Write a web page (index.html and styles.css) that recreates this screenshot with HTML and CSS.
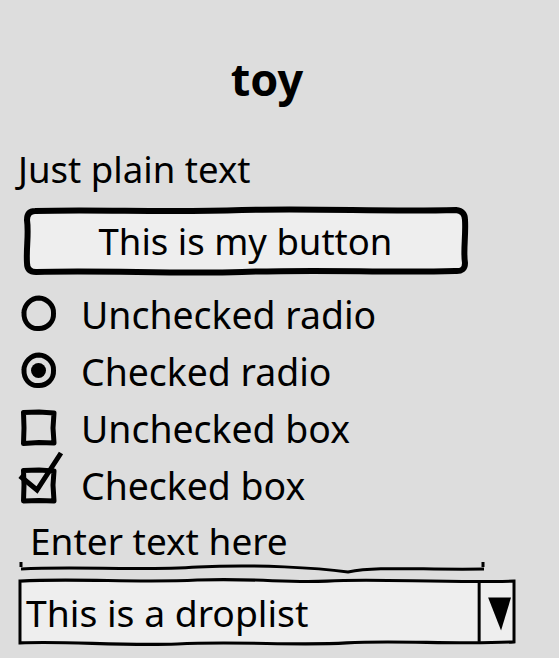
FILE: index.html
```html
<!DOCTYPE html>
<html lang="en">
<head>
    <meta charset="UTF-8">
    <title>toy</title>
    <link rel="stylesheet" href="styles.css">
</head>
<body>
    <div class="panel">
        <h1 class="title">toy</h1>

        <p class="plain">Just plain text</p>

        <button class="sketch-btn">
            <svg class="btn-frame" viewBox="0 0 447 70" preserveAspectRatio="none">
                <path d="M13,5 C80,3 140,7 220,4 C300,2 360,6 434,4 Q443,5 443,14 C444,30 441,45 443,57 Q443,66 433,65 C360,67 300,63 220,66 C150,68 80,64 14,66 Q5,66 5,57 C4,42 7,28 5,14 Q5,5 13,5 Z" />
            </svg>
            <span class="btn-label">This is my button</span>
        </button>

        <div class="options">
            <label class="option">
                <svg class="mark" viewBox="0 0 36 36">
                    <path class="line" d="M18,2 C26,2.5 33,9 32.5,17.5 C33,26 26,33 17,32.5 C9,33 2.5,26 3,17 C3,9 10,2 18,2 Z" />
                </svg>
                <span>Unchecked radio</span>
            </label>
            <label class="option">
                <svg class="mark" viewBox="0 0 36 36">
                    <path class="line" d="M18,2 C26,2.5 33,9 32.5,17.5 C33,26 26,33 17,32.5 C9,33 2.5,26 3,17 C3,9 10,2 18,2 Z" />
                    <circle class="dot" cx="17.5" cy="17.5" r="7.5" />
                </svg>
                <span>Checked radio</span>
            </label>
            <label class="option">
                <svg class="mark" viewBox="0 0 36 36">
                    <path class="line" d="M2.5,2.5 L18,2 L33,3 L32,18 L33,33 L18,32.5 L2.5,33.5 L3,18 Z" />
                </svg>
                <span>Unchecked box</span>
            </label>
            <label class="option">
                <svg class="mark" viewBox="0 0 36 36">
                    <path class="line" d="M2.5,3.5 L18,3 L33,4 L32,18 L33,34 L18,33.5 L2.5,34 L3,18 Z" />
                    <path class="check" d="M-1,9 L16,23 L40,-14" />
                </svg>
                <span>Checked box</span>
            </label>
        </div>

        <div class="text-field">
            <span class="field-text">Enter text here</span>
            <svg class="field-line" viewBox="0 0 470 16" preserveAspectRatio="none">
                <path d="M3,3 L3,8 M465,3 L465,8 M3,10 C60,7 120,12 180,8 C240,5 300,9 330,13 C360,7 400,11 466,10" />
            </svg>
        </div>

        <div class="droplist">
            <svg class="drop-frame" viewBox="0 0 500 66" preserveAspectRatio="none">
                <path class="frame" d="M2,3 C60,0 120,5 180,2 C240,0 270,5 310,3 C360,0 420,5 498,3 L498,62 C440,65 380,60 330,63 C280,66 220,61 160,64 C100,66 50,61 2,63 Z" />
                <path class="frame" d="M463,3 L463,62" />
                <path class="arrow" d="M472,19 L495,19 L485,51 Z" />
            </svg>
            <span class="drop-label">This is a droplist</span>
        </div>
    </div>
</body>
</html>
```

FILE: styles.css
```css
/* Base */
* {
    margin: 0;
    padding: 0;
    box-sizing: border-box;
}

body {
    background: #dddddd;
    font-family: "Noto Sans", "Open Sans", sans-serif;
    color: #000;
}

/* Panel */
.panel {
    width: 498px;
    margin-left: 18px;
    padding-top: 50px;
    display: flex;
    flex-direction: column;
}

.title {
    text-align: center;
    font-size: 45px;
    font-weight: 700;
    line-height: 58px;
}

.plain {
    margin-top: 38px;
    font-size: 36.6px;
    line-height: 46px;
}

/* Button */
.sketch-btn {
    position: relative;
    margin-top: 14px;
    margin-left: 4px;
    width: 447px;
    height: 70px;
    border: none;
    background: none;
    font-family: inherit;
    font-size: 36.5px;
    color: #000;
}

.btn-frame {
    position: absolute;
    inset: 0;
    width: 100%;
    height: 100%;
}

.btn-frame path {
    fill: #eeeeee;
    stroke: #000;
    stroke-width: 6;
    stroke-linejoin: round;
}

.btn-label {
    position: relative;
}

/* Radios and boxes */
.options {
    margin-top: 14px;
    display: flex;
    flex-direction: column;
    gap: 9px;
}

.option {
    display: flex;
    align-items: center;
    gap: 24px;
    height: 48px;
    padding-left: 3px;
    font-size: 37.4px;
}

.mark {
    width: 36px;
    height: 36px;
    overflow: visible;
    flex-shrink: 0;
}

.mark .line {
    fill: none;
    stroke: #000;
    stroke-width: 5;
    stroke-linejoin: round;
}

.mark .dot {
    fill: #000;
}

.mark .check {
    fill: none;
    stroke: #000;
    stroke-width: 5;
    stroke-linejoin: miter;
}

/* Text field */
.text-field {
    margin-top: 10px;
    display: flex;
    flex-direction: column;
    width: 470px;
}

.field-text {
    padding-left: 12px;
    font-size: 37px;
    line-height: 44px;
}

.field-line {
    width: 470px;
    height: 16px;
    margin-top: -4px;
}

.field-line path {
    fill: none;
    stroke: #000;
    stroke-width: 3;
}

/* Droplist */
.droplist {
    position: relative;
    margin-top: 3px;
    height: 68px;
    display: flex;
    align-items: center;
}

.drop-frame {
    position: absolute;
    inset: 0;
    width: 100%;
    height: 100%;
}

.drop-frame .frame {
    fill: #eeeeee;
    stroke: #000;
    stroke-width: 3;
}

.drop-frame .arrow {
    fill: #000;
}

.drop-label {
    position: relative;
    padding-left: 8px;
    font-size: 37.3px;
}
```
